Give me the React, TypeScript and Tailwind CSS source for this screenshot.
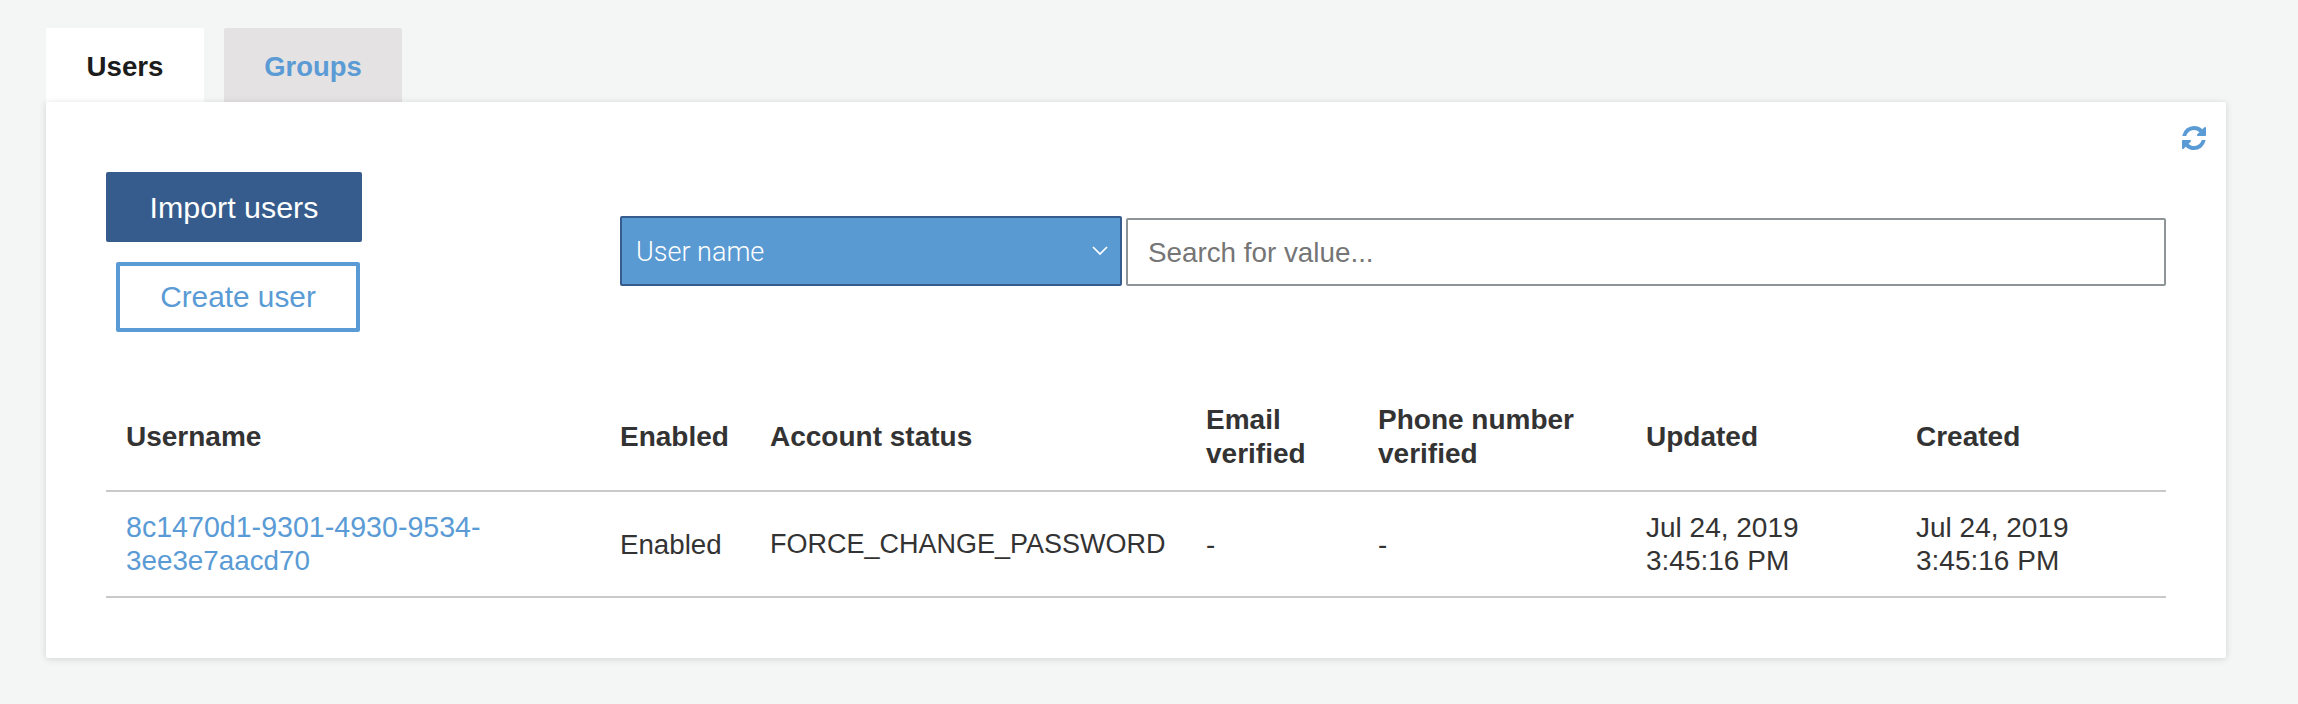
import React from "react";

const columns = [
  { label: "Username", w: "w-[494px]" },
  { label: "Enabled", w: "w-[150px]" },
  { label: "Account status", w: "w-[436px]" },
  { label: "Email verified", w: "w-[172px]" },
  { label: "Phone number verified", w: "w-[268px]" },
  { label: "Updated", w: "w-[270px]" },
  { label: "Created", w: "w-[270px]" },
];

function RefreshIcon() {
  return (
    <svg viewBox="128 128 1536 1536" className="w-6 h-6 text-[#5a9bd5]" fill="currentColor" aria-hidden="true">
      <path d="M1639 1056q0 5-1 7-64 268-268 434.5t-478 166.5q-146 0-282.5-55t-243.5-157l-129 129q-19 19-45 19t-45-19-19-45v-448q0-26 19-45t45-19h448q26 0 45 19t19 45-19 45l-137 137q71 66 161 102t187 36q134 0 250-65t186-179q11-17 53-117 8-23 30-23h192q13 0 22.5 9.5t9.5 22.5zm25-800v448q0 26-19 45t-45 19h-448q-26 0-45-19t-19-45 19-45l138-138q-148-137-349-137-134 0-250 65t-186 179q-11 17-53 117-8 23-30 23h-199q-13 0-22.5-9.5t-9.5-22.5v-7q65-268 270-434.5t480-166.5q146 0 284 55.5t245 156.5l130-129q19-19 45-19t45 19 19 45z" />
    </svg>
  );
}

export default function App() {
  return (
    <div className="h-[704px] bg-[#f4f6f5] pt-[28px] pl-[46px] pr-[72px] font-['Liberation_Sans',Arial,sans-serif] text-[27.7px] text-[#333333]">
      <div className="flex gap-[20px] h-[74px]">
        <button className="w-[158px] h-full pt-[3px] bg-white rounded-t-[2px] font-bold text-[#1c1c1c]">Users</button>
        <button className="w-[178px] h-full pt-[3px] bg-[#e4e2e3] rounded-t-[2px] font-bold text-[#5a9bd5] text-[27.4px]">Groups</button>
      </div>

      <div className="relative bg-white rounded-[2px] shadow-[0_1px_7px_rgba(0,0,0,0.14)] px-[60px] pt-[24px] pb-[60px]">
        <div className="flex justify-end h-[24px] -mr-[40px]">
          <RefreshIcon />
        </div>

        <div className="flex items-center mt-[22px] h-[160px]">
          <div className="flex flex-col w-[256px] shrink-0">
            <button className="h-[70px] pt-[2px] bg-[#365c8d] text-white text-[30.4px] rounded-[2px]">Import users</button>
            <button className="mt-[20px] ml-[10px] w-[244px] h-[70px] pt-[1px] bg-white border-[4px] border-[#5a9bd5] text-[#5a9bd5] text-[29.8px] rounded-[2px]">
              Create user
            </button>
          </div>

          <div className="flex items-end ml-[258px] flex-1 mt-[-2px]">
            <div className="flex items-center justify-between w-[502px] h-[70px] pt-[3px] bg-[#5a9ad3] border-[2px] border-[#365c8d] rounded-[2px] pl-[14px] pr-[12px] text-white text-[27px] font-light font-['Roboto',sans-serif]">
              <span>User name</span>
              <svg viewBox="0 0 16 9" className="w-[16px] h-[9px] -mt-[5px]" fill="none" stroke="currentColor" strokeWidth="1.7" aria-hidden="true">
                <path d="M1 1l7 7 7-7" />
              </svg>
            </div>
            <input
              className="ml-[4px] flex-1 h-[68px] border-[2px] border-[#8d9396] rounded-[2px] pl-[20px] pt-[2px] bg-white text-[27.8px] placeholder:text-[#757575] outline-none"
              placeholder="Search for value..."
            />
          </div>
        </div>

        <table className="mt-[51px] w-full table-fixed border-collapse">
          <colgroup>
            {columns.map((c) => (
              <col key={c.label} className={c.w} />
            ))}
          </colgroup>
          <thead>
            <tr className="border-b-[2px] border-[#c9c9c9]">
              {columns.map((c) => (
                <th key={c.label} className="h-[108px] pl-[20px] pr-[20px] text-left align-middle font-bold text-[28px] leading-[33.5px]">
                  {c.label}
                </th>
              ))}
            </tr>
          </thead>
          <tbody>
            <tr className="border-b-[2px] border-[#c9c9c9] leading-[33px]">
              <td className="h-[106px] pl-[20px] pr-[20px]">
                <a className="text-[#5a9bd5]">
                  <span className="text-[28.6px]">8c1470d1-9301-4930-9534-</span>
                  <br />
                  <span className="text-[27.8px]">3ee3e7aacd70</span>
                </a>
              </td>
              <td className="pl-[20px]">Enabled</td>
              <td className="pl-[20px] text-[27px]">FORCE_CHANGE_PASSWORD</td>
              <td className="pl-[20px]">-</td>
              <td className="pl-[20px]">-</td>
              <td className="pl-[20px] text-[28px]">Jul 24, 2019<br />3:45:16 PM</td>
              <td className="pl-[20px] text-[28px]">Jul 24, 2019<br />3:45:16 PM</td>
            </tr>
          </tbody>
        </table>
      </div>
    </div>
  );
}
